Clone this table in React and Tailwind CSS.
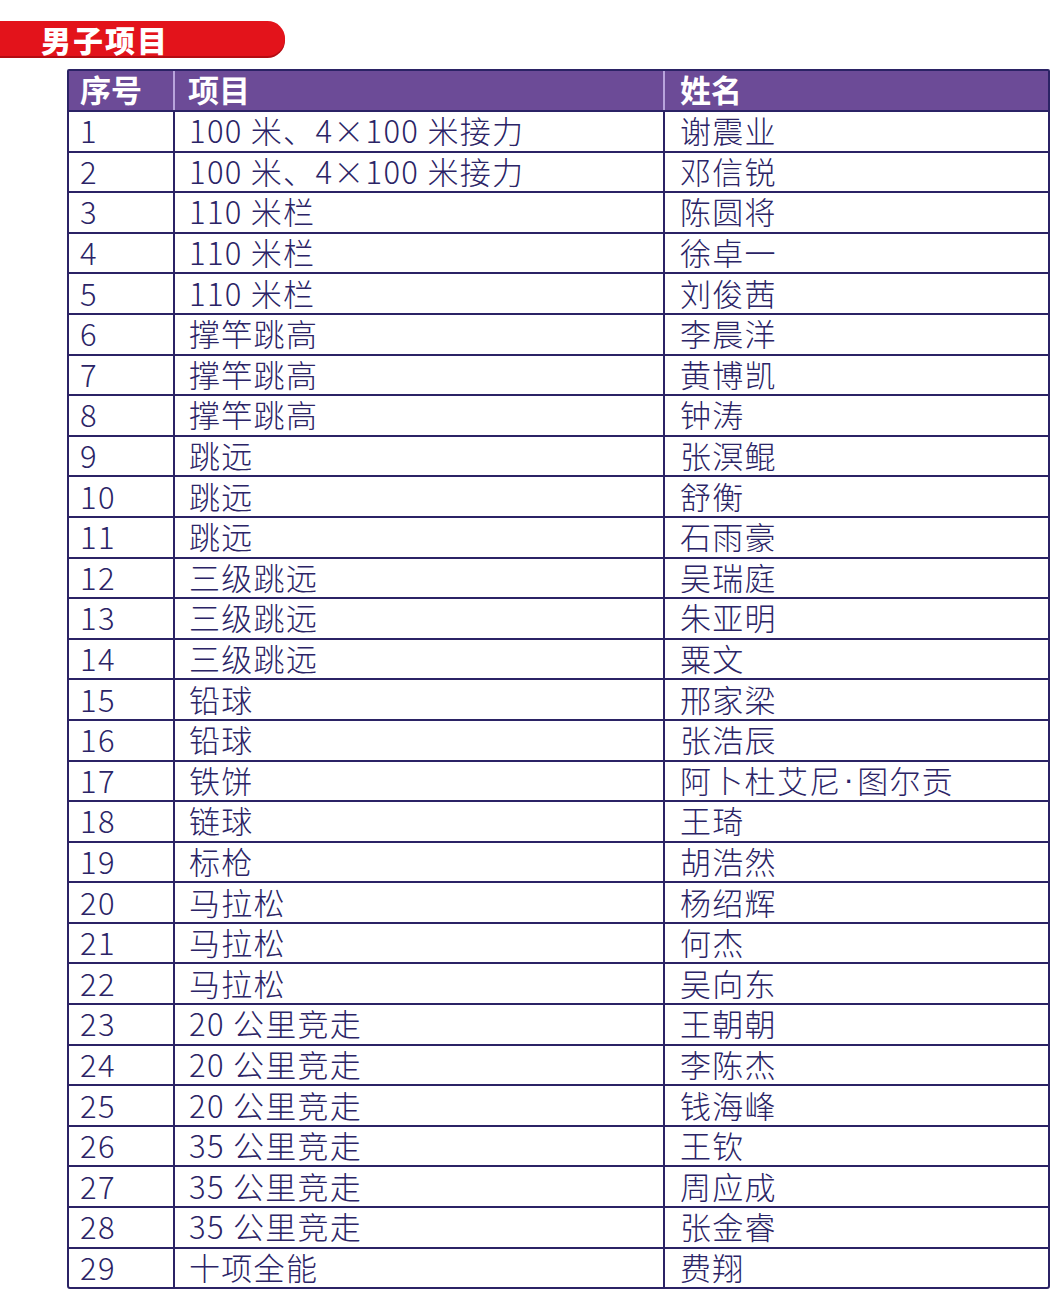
import React from 'react';

const rows = [
  ['1', '100 米、4×100 米接力', '谢震业'],
  ['2', '100 米、4×100 米接力', '邓信锐'],
  ['3', '110 米栏', '陈圆将'],
  ['4', '110 米栏', '徐卓一'],
  ['5', '110 米栏', '刘俊茜'],
  ['6', '撑竿跳高', '李晨洋'],
  ['7', '撑竿跳高', '黄博凯'],
  ['8', '撑竿跳高', '钟涛'],
  ['9', '跳远', '张溟鲲'],
  ['10', '跳远', '舒衡'],
  ['11', '跳远', '石雨豪'],
  ['12', '三级跳远', '吴瑞庭'],
  ['13', '三级跳远', '朱亚明'],
  ['14', '三级跳远', '粟文'],
  ['15', '铅球', '邢家梁'],
  ['16', '铅球', '张浩辰'],
  ['17', '铁饼', '阿卜杜艾尼·图尔贡'],
  ['18', '链球', '王琦'],
  ['19', '标枪', '胡浩然'],
  ['20', '马拉松', '杨绍辉'],
  ['21', '马拉松', '何杰'],
  ['22', '马拉松', '吴向东'],
  ['23', '20 公里竞走', '王朝朝'],
  ['24', '20 公里竞走', '李陈杰'],
  ['25', '20 公里竞走', '钱海峰'],
  ['26', '35 公里竞走', '王钦'],
  ['27', '35 公里竞走', '周应成'],
  ['28', '35 公里竞走', '张金睿'],
  ['29', '十项全能', '费翔'],
];

const font = { fontFamily: '"Noto Sans CJK SC", "Noto Sans", sans-serif' };

// the name's middle dot is narrow in the original, so render it in a latin face
function Name({ text }) {
  const parts = text.split('·');
  if (parts.length === 1) return text;
  return (
    <>
      {parts[0]}
      <span className="mx-[2px]" style={{ fontFamily: '"Liberation Sans", sans-serif' }}>·</span>
      {parts[1]}
    </>
  );
}

export default function App() {
  return (
    <div className="w-[1052px] h-[1298px] bg-white overflow-hidden" style={font}>
      <div className="pt-[21px]">
        <div className="w-[285px] h-[35px] bg-[#e3131b] rounded-r-full flex items-center pl-[41px] shadow-[0_2px_0_#b40c12]">
          <span className="text-white text-[30px] font-black tracking-[2px] leading-[32px]">男子项目</span>
        </div>
      </div>

      <div className="ml-[67px] mt-[13px] w-[983px] border-2 border-[#2b2365] rounded-b-[3px] rounded-t-[2px]">
        <div className="grid grid-cols-[104px_490px_1fr] h-[39px] bg-[#6c4b97] text-white text-[31px] font-bold leading-[32px]">
          <div className="flex items-center pl-[11px] pb-[3px]">序号</div>
          <div className="flex items-center pl-[13px] pb-[3px] border-l-2 border-[#b9a4dc]">项目</div>
          <div className="flex items-center pl-[15px] pb-[3px] border-l-2 border-[#b9a4dc]">姓名</div>
        </div>
        {rows.map(([n, item, name]) => (
          <div
            key={n}
            className="grid grid-cols-[104px_490px_1fr] h-[40.6px] border-t-2 border-[#2b2365] text-[#2b2466] text-[31px] font-light leading-[32px] tracking-[1.3px]"
          >
            <div className="flex items-center pl-[11px] pb-[2px]">{n}</div>
            <div className="flex items-center pl-[14px] pb-[2px] border-l-2 border-[#2b2365]">{item}</div>
            <div className="flex items-center pl-[15px] pb-[2px] border-l-2 border-[#2b2365]">
              <Name text={name} />
            </div>
          </div>
        ))}
      </div>
    </div>
  );
}
